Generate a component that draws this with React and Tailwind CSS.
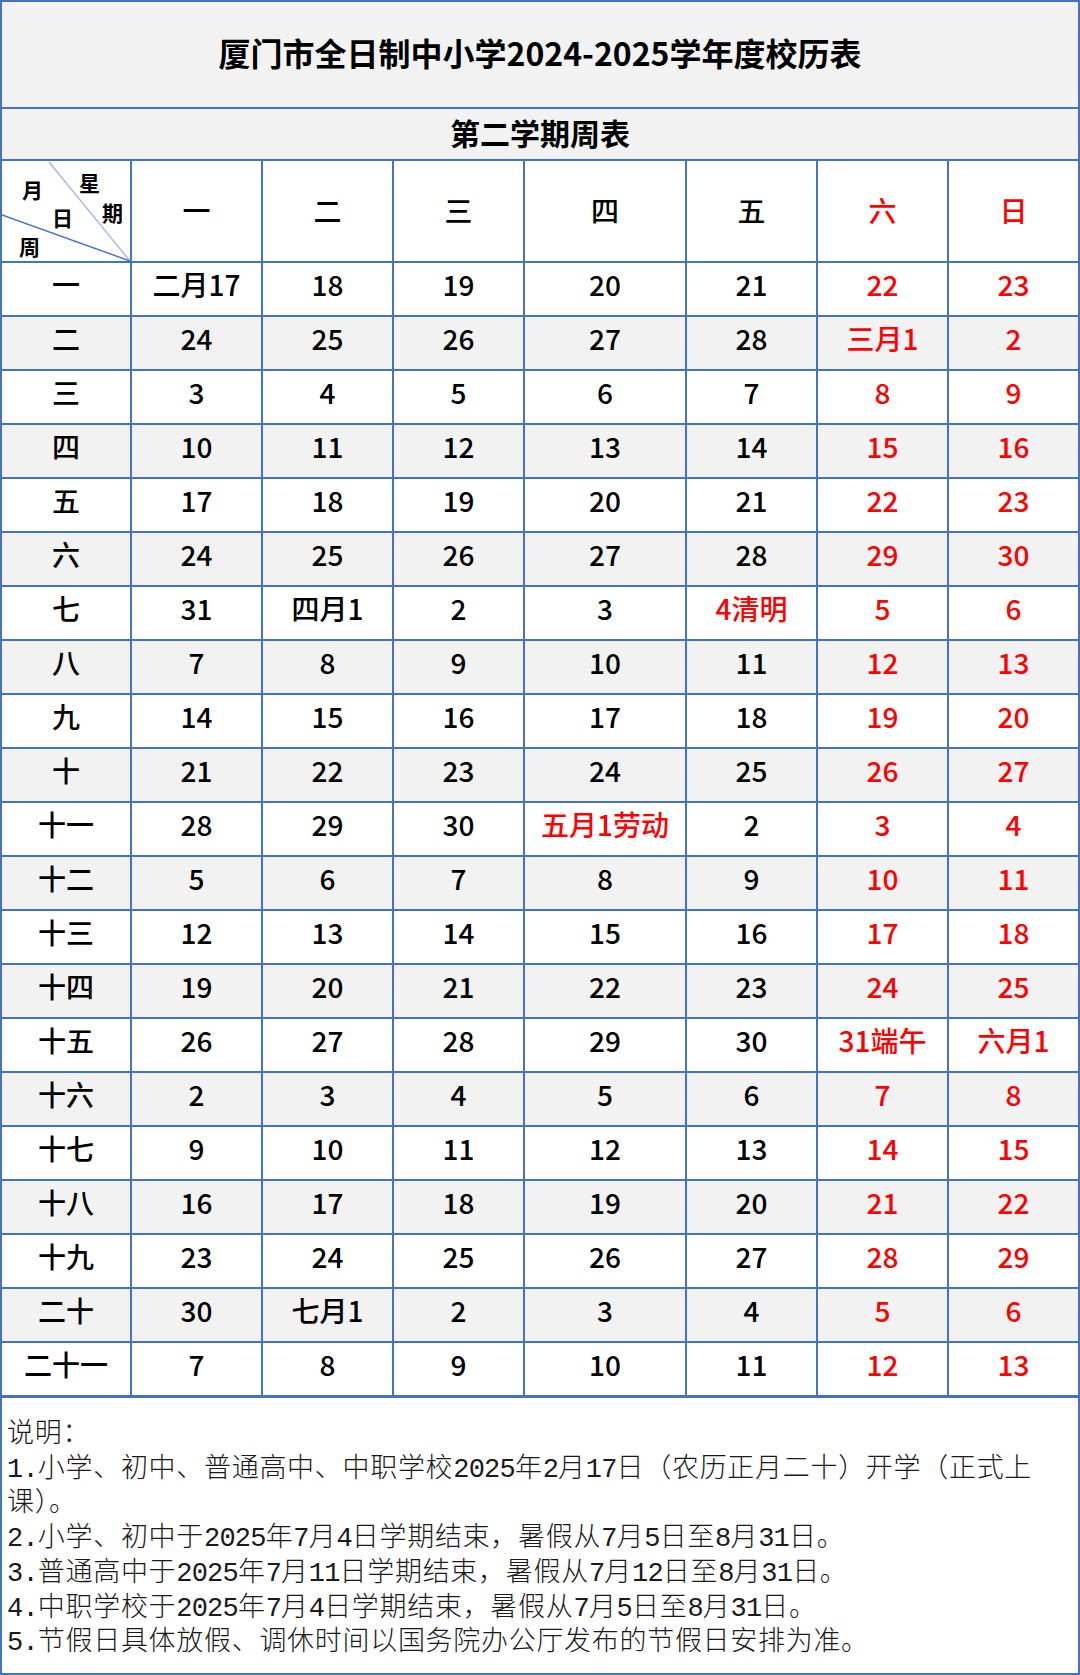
const R = "r";

// each cell: [text, red?]
const ROWS = [
  ["一", ["二月17", "18", "19", "20", "21", "22r", "23r"]],
  ["二", ["24", "25", "26", "27", "28", "三月1r", "2r"]],
  ["三", ["3", "4", "5", "6", "7", "8r", "9r"]],
  ["四", ["10", "11", "12", "13", "14", "15r", "16r"]],
  ["五", ["17", "18", "19", "20", "21", "22r", "23r"]],
  ["六", ["24", "25", "26", "27", "28", "29r", "30r"]],
  ["七", ["31", "四月1", "2", "3", "4清明r", "5r", "6r"]],
  ["八", ["7", "8", "9", "10", "11", "12r", "13r"]],
  ["九", ["14", "15", "16", "17", "18", "19r", "20r"]],
  ["十", ["21", "22", "23", "24", "25", "26r", "27r"]],
  ["十一", ["28", "29", "30", "五月1劳动r", "2", "3r", "4r"]],
  ["十二", ["5", "6", "7", "8", "9", "10r", "11r"]],
  ["十三", ["12", "13", "14", "15", "16", "17r", "18r"]],
  ["十四", ["19", "20", "21", "22", "23", "24r", "25r"]],
  ["十五", ["26", "27", "28", "29", "30", "31端午r", "六月1r"]],
  ["十六", ["2", "3", "4", "5", "6", "7r", "8r"]],
  ["十七", ["9", "10", "11", "12", "13", "14r", "15r"]],
  ["十八", ["16", "17", "18", "19", "20", "21r", "22r"]],
  ["十九", ["23", "24", "25", "26", "27", "28r", "29r"]],
  ["二十", ["30", "七月1", "2", "3", "4", "5r", "6r"]],
  ["二十一", ["7", "8", "9", "10", "11", "12r", "13r"]],
];

const DAYS = ["一", "二", "三", "四", "五", "六", "日"];

const NOTES = [
  "说明：",
  "1.小学、初中、普通高中、中职学校2025年2月17日（农历正月二十）开学（正式上",
  "课）。",
  "2.小学、初中于2025年7月4日学期结束，暑假从7月5日至8月31日。",
  "3.普通高中于2025年7月11日学期结束，暑假从7月12日至8月31日。",
  "4.中职学校于2025年7月4日学期结束，暑假从7月5日至8月31日。",
  "5.节假日具体放假、调休时间以国务院办公厅发布的节假日安排为准。",
];

// 数字用等宽衬线字体，字距收紧一点
function NoteLine({ text }) {
  return (
    <div className="whitespace-nowrap">
      {text.split(/([0-9.]+)/).map((part, i) =>
        i % 2 === 1 ? (
          <span key={i} className="tracking-[-0.8px]">{part}</span>
        ) : (
          <span key={i}>{part}</span>
        )
      )}
    </div>
  );
}

function CornerCell() {
  return (
    <div className="relative bg-white font-bold text-[21px] leading-none text-black">
      <svg className="absolute inset-0" width="128" height="100" viewBox="0 0 128 100">
        <line x1="47" y1="1" x2="128" y2="100" stroke="#9fb5e8" strokeWidth="1.3" />
        <line x1="0" y1="54" x2="128" y2="100" stroke="#4a74cc" strokeWidth="1.5" />
      </svg>
      <span className="absolute left-[20px] top-[18px]">月</span>
      <span className="absolute left-[77px] top-[11px]">星</span>
      <span className="absolute left-[100px] top-[41px]">期</span>
      <span className="absolute left-[50px] top-[46px]">日</span>
      <span className="absolute left-[17px] top-[75px]">周</span>
    </div>
  );
}

export default function App() {
  return (
    <div className="w-[1080px] h-[1675px] border-2 border-[#4472c4] bg-white flex flex-col font-['Noto_Sans_CJK_SC',sans-serif] text-black">
      {/* 标题 */}
      <div className="h-[107px] shrink-0 pb-[6px] bg-[#f2f2f2] border-b-2 border-[#4472c4] flex items-center justify-center">
        <h1 className="text-[32px] font-bold leading-none">厦门市全日制中小学2024-2025学年度校历表</h1>
      </div>
      <div className="h-[52px] shrink-0 pb-[4px] bg-[#f2f2f2] border-b-2 border-[#4472c4] flex items-center justify-center">
        <h2 className="text-[30px] font-bold leading-none">第二学期周表</h2>
      </div>

      {/* 周表 */}
      <div className="grid shrink-0 grid-cols-[128px_129px_129px_129px_160px_129px_129px_129px] grid-rows-[100px_repeat(21,52px)] gap-[2px] bg-[#4472c4] border-b-[3px] border-[#4472c4] text-[28px] font-medium">
        <CornerCell />
        {DAYS.map((d, i) => (
          <div key={d} className={`bg-white flex items-center justify-center pb-[2px] ${i >= 5 ? "text-[#ff0000]" : ""}`}>
            {d}
          </div>
        ))}
        {ROWS.map(([week, cells], ri) => {
          const bg = ri % 2 === 1 ? "bg-[#f2f2f2]" : "bg-white";
          return [
            <div key={week} className={`${bg} flex items-center justify-center pb-[11px]`}>{week}</div>,
            ...cells.map((c, ci) => {
              const red = c.endsWith(R);
              const txt = red ? c.slice(0, -1) : c;
              return (
                <div key={week + ci} className={`${bg} flex items-center justify-center pb-[11px] ${red ? "text-[#ff0000]" : ""}`}>
                  {txt}
                </div>
              );
            }),
          ];
        })}
      </div>

      {/* 说明 */}
      <div className="flex-1 pl-[5px] pt-[20px] font-['Liberation_Mono','Noto_Sans_CJK_SC',monospace] font-light text-[27px] leading-[34.7px] tracking-[0.7px] text-[#1a1a1a]">
        {NOTES.map((n) => (
          <NoteLine key={n} text={n} />
        ))}
      </div>
    </div>
  );
}
